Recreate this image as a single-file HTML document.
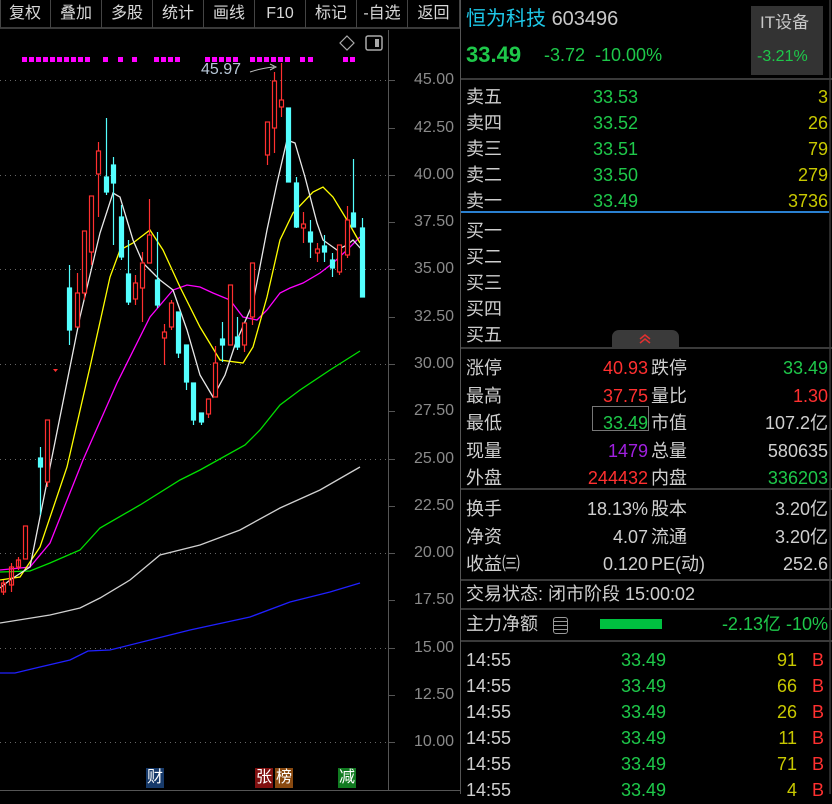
<!DOCTYPE html>
<html><head><meta charset="utf-8"><style>
*{margin:0;padding:0;box-sizing:border-box}
body{width:832px;height:794px;background:#000;overflow:hidden;position:relative;font-family:"Liberation Sans","Noto Sans CJK SC",sans-serif;color:#c8c8c8}
.a{position:absolute;white-space:nowrap;line-height:1}
.tb{position:absolute;top:0;height:28px;font-size:16px;color:#d8d8d8;text-align:center;line-height:28px;border-right:1px solid #444}
.f18{font-size:18px}
.g{color:#1ec84a}.y{color:#c8c800}.r{color:#ff3030}.w{color:#cfcfcf}
.hl{position:absolute;left:461px;width:371px;height:2px;background:#3a3a3a}
.ax{position:absolute;font-size:16px;color:#8a8a8a;right:378px;line-height:1}
</style></head><body>
<div style="position:absolute;left:0;top:0;width:460px;height:29px;border-bottom:2px solid #3a3a3a;border-left:1px solid #444"></div>
<div class="tb" style="left:0;width:51px">复权</div>
<div class="tb" style="left:51px;width:51px">叠加</div>
<div class="tb" style="left:102px;width:51px">多股</div>
<div class="tb" style="left:153px;width:51px">统计</div>
<div class="tb" style="left:204px;width:51px">画线</div>
<div class="tb" style="left:255px;width:51px">F10</div>
<div class="tb" style="left:306px;width:51px">标记</div>
<div class="tb" style="left:357px;width:51px">-自选</div>
<div class="tb" style="left:408px;width:52px">返回</div>

<svg style="position:absolute;left:0;top:0" width="461" height="794">
<g stroke="#666" stroke-dasharray="1,4" stroke-width="1">
<line x1="0" y1="80.5" x2="388" y2="80.5"/><line x1="0" y1="175.5" x2="388" y2="175.5"/><line x1="0" y1="269.5" x2="388" y2="269.5"/><line x1="0" y1="364.5" x2="388" y2="364.5"/><line x1="0" y1="459.5" x2="388" y2="459.5"/><line x1="0" y1="553.5" x2="388" y2="553.5"/><line x1="0" y1="648.5" x2="388" y2="648.5"/><line x1="0" y1="742.5" x2="388" y2="742.5"/>
</g>
<g stroke="#555" stroke-width="1">
<line x1="388.5" y1="30" x2="388.5" y2="790"/>
<line x1="0" y1="790.5" x2="460" y2="790.5"/>
<line x1="460.5" y1="0" x2="460.5" y2="794"/>
<line x1="388" y1="80.5" x2="395" y2="80.5"/><line x1="388" y1="128.5" x2="395" y2="128.5"/><line x1="388" y1="175.5" x2="395" y2="175.5"/><line x1="388" y1="222.5" x2="395" y2="222.5"/><line x1="388" y1="269.5" x2="395" y2="269.5"/><line x1="388" y1="317.5" x2="395" y2="317.5"/><line x1="388" y1="364.5" x2="395" y2="364.5"/><line x1="388" y1="411.5" x2="395" y2="411.5"/><line x1="388" y1="459.5" x2="395" y2="459.5"/><line x1="388" y1="506.5" x2="395" y2="506.5"/><line x1="388" y1="553.5" x2="395" y2="553.5"/><line x1="388" y1="600.5" x2="395" y2="600.5"/><line x1="388" y1="648.5" x2="395" y2="648.5"/><line x1="388" y1="695.5" x2="395" y2="695.5"/><line x1="388" y1="742.5" x2="395" y2="742.5"/>
</g>
<g fill="#ff00ff">
<rect x="22" y="57" width="5" height="5"/><rect x="29" y="57" width="5" height="5"/><rect x="36" y="57" width="5" height="5"/><rect x="43" y="57" width="5" height="5"/><rect x="50" y="57" width="5" height="5"/><rect x="57" y="57" width="5" height="5"/><rect x="64" y="57" width="5" height="5"/><rect x="71" y="57" width="5" height="5"/><rect x="78" y="57" width="5" height="5"/><rect x="85" y="57" width="5" height="5"/><rect x="103" y="57" width="5" height="5"/><rect x="118" y="57" width="5" height="5"/><rect x="132" y="57" width="5" height="5"/><rect x="154" y="57" width="5" height="5"/><rect x="161" y="57" width="5" height="5"/><rect x="168" y="57" width="5" height="5"/><rect x="175" y="57" width="5" height="5"/><rect x="205" y="57" width="5" height="5"/><rect x="212" y="57" width="5" height="5"/><rect x="219" y="57" width="5" height="5"/><rect x="226" y="57" width="5" height="5"/><rect x="233" y="57" width="5" height="5"/><rect x="250" y="57" width="5" height="5"/><rect x="257" y="57" width="5" height="5"/><rect x="264" y="57" width="5" height="5"/><rect x="271" y="57" width="5" height="5"/><rect x="278" y="57" width="5" height="5"/><rect x="285" y="57" width="5" height="5"/><rect x="300" y="57" width="5" height="5"/><rect x="308" y="57" width="5" height="5"/><rect x="343" y="57" width="5" height="5"/><rect x="350" y="57" width="5" height="5"/>
</g>
<path d="M347 36 L354 43 L347 50 L340 43 Z" fill="none" stroke="#aaa" stroke-width="1.2"/>
<rect x="366" y="36" width="16" height="14" rx="2" fill="none" stroke="#aaa" stroke-width="1.5"/><rect x="375" y="39" width="4" height="8" fill="#aaa"/>
<g fill="none" stroke-width="1.3">
<polyline stroke="#2020ff" points="0,673 15,673 40,667 70,660 88,651 110,650 150,640 190,630 250,617 290,602 330,592 360,583"/>
<polyline stroke="#d0d0d0" points="0,623 50,615 80,608 100,598 130,580 160,555 200,545 240,530 280,508 320,490 360,467"/>
<polyline stroke="#00e000" points="0,572 30,571 50,563 80,550 100,528 140,505 180,480 200,470 245,445 260,430 280,405 300,390 330,370 360,351"/>
<polyline stroke="#ff00ff" points="0,570 30,567 50,543 83,460 117,383 150,317 173,290 187,285 200,287 213,293 230,300 243,317 257,320 267,310 280,293 290,288 303,283 320,273 333,263 347,250 360,237"/>
<polyline stroke="#ffff00" points="0,580 20,577 40,547 67,467 90,367 110,277 120,250 133,243 150,230 163,250 180,287 200,327 220,360 243,363 253,347 267,297 280,240 293,213 313,192 323,187 333,197 347,220 360,243"/>
<polyline stroke="#e8e8e8" points="0,588 10,580 30,567 40,517 60,417 80,317 100,233 113,193 120,197 133,240 143,263 160,280 173,290 187,330 200,375 213,397 225,375 235,345 253,303 267,230 277,183 287,140 295,143 305,177 317,223 323,240 337,250 347,245 353,240 362,250"/>
</g>
<g stroke-width="1.2">
<g stroke="#ff3030" fill="none">
<line x1="3.5" y1="580" x2="3.5" y2="595"/><rect x="1.5" y="583" width="4" height="9"/>
<line x1="11.5" y1="563" x2="11.5" y2="592"/><rect x="9.5" y="567" width="4" height="18"/>
<line x1="18.5" y1="557" x2="18.5" y2="570"/><rect x="16.5" y="560" width="4" height="7"/>
<rect x="23.5" y="526" width="4" height="33"/>
<line x1="47.5" y1="420" x2="47.5" y2="487"/><rect x="45.5" y="420" width="4" height="62" fill="#000"/>
<line x1="77.5" y1="273" x2="77.5" y2="327"/><rect x="75.5" y="293" width="4" height="34" fill="#000"/>
<line x1="84.5" y1="231" x2="84.5" y2="300"/><rect x="82.5" y="231" width="4" height="62" fill="#000"/>
<line x1="91.5" y1="196" x2="91.5" y2="265"/><rect x="89.5" y="196" width="4" height="56" fill="#000"/>
<line x1="98.5" y1="142" x2="98.5" y2="217"/><rect x="96.5" y="151" width="4" height="23" fill="#000"/>
<line x1="135.5" y1="275" x2="135.5" y2="305"/><rect x="133.5" y="283" width="4" height="16" fill="#000"/>
<line x1="142.5" y1="252" x2="142.5" y2="322"/><rect x="140.5" y="263" width="4" height="25" fill="#000"/>
<line x1="149.5" y1="199" x2="149.5" y2="263"/><rect x="147.5" y="235" width="4" height="28" fill="#000"/>
<line x1="164.5" y1="324" x2="164.5" y2="365"/><rect x="162.5" y="332" width="4" height="6" fill="#000"/>
<line x1="171.5" y1="300" x2="171.5" y2="330"/><rect x="169.5" y="303" width="4" height="24" fill="#000"/>
<line x1="208.5" y1="399" x2="208.5" y2="418"/><rect x="206.5" y="399" width="4" height="15" fill="#000"/>
<line x1="215.5" y1="346" x2="215.5" y2="397"/><rect x="213.5" y="363" width="4" height="34" fill="#000"/>
<rect x="228.5" y="285" width="4" height="60" fill="#000"/>
<line x1="244.5" y1="323" x2="244.5" y2="352"/><rect x="242.5" y="323" width="4" height="22" fill="#000"/>
<line x1="252.5" y1="263" x2="252.5" y2="325"/><rect x="250.5" y="263" width="4" height="54" fill="#000"/>
<line x1="267.5" y1="122" x2="267.5" y2="165"/><rect x="265.5" y="122" width="4" height="33" fill="#000"/>
<line x1="274.5" y1="72" x2="274.5" y2="153"/><rect x="272.5" y="81" width="4" height="47" fill="#000"/>
<line x1="281.5" y1="63" x2="281.5" y2="117"/><rect x="279.5" y="100" width="4" height="7" fill="#000"/>
<line x1="303.5" y1="212" x2="303.5" y2="243"/><rect x="301.5" y="224" width="4" height="4" fill="#000"/>
<line x1="317.5" y1="243" x2="317.5" y2="262"/><rect x="315.5" y="249" width="4" height="4" fill="#000"/>
<line x1="339.5" y1="245" x2="339.5" y2="275"/><rect x="337.5" y="245" width="4" height="27" fill="#000"/>
<line x1="347.5" y1="206" x2="347.5" y2="258"/><rect x="345.5" y="220" width="4" height="35" fill="#000"/>
</g>
<g stroke="#54ffff" fill="#54ffff">
<line x1="40.5" y1="447" x2="40.5" y2="515"/><rect x="38.5" y="458" width="4" height="9"/>
<line x1="69.5" y1="265" x2="69.5" y2="345"/><rect x="67.5" y="288" width="4" height="42"/>
<line x1="106.5" y1="118" x2="106.5" y2="195"/><rect x="104.5" y="177" width="4" height="15"/>
<line x1="113.5" y1="157" x2="113.5" y2="245"/><rect x="111.5" y="165" width="4" height="18"/>
<line x1="121.5" y1="205" x2="121.5" y2="260"/><rect x="119.5" y="217" width="4" height="40"/>
<line x1="128.5" y1="240" x2="128.5" y2="305"/><rect x="126.5" y="274" width="4" height="28"/>
<line x1="157.5" y1="232" x2="157.5" y2="308"/><rect x="155.5" y="280" width="4" height="25"/>
<line x1="178.5" y1="312" x2="178.5" y2="358"/><rect x="176.5" y="312" width="4" height="41"/>
<line x1="186.5" y1="345" x2="186.5" y2="390"/><rect x="184.5" y="345" width="4" height="37"/>
<line x1="193.5" y1="383" x2="193.5" y2="425"/><rect x="191.5" y="383" width="4" height="37"/>
<line x1="201.5" y1="413" x2="201.5" y2="425"/><rect x="199.5" y="413" width="4" height="9"/>
<line x1="222.5" y1="322" x2="222.5" y2="362"/><rect x="220.5" y="339" width="4" height="6"/>
<line x1="237.5" y1="317" x2="237.5" y2="350"/><rect x="235.5" y="337" width="4" height="10"/>
<rect x="286.5" y="108" width="4" height="74"/>
<line x1="296.5" y1="177" x2="296.5" y2="228"/><rect x="294.5" y="183" width="4" height="44"/>
<line x1="310.5" y1="220" x2="310.5" y2="258"/><rect x="308.5" y="232" width="4" height="10"/>
<line x1="324.5" y1="235" x2="324.5" y2="262"/><rect x="322.5" y="246" width="4" height="6"/>
<line x1="332.5" y1="253" x2="332.5" y2="277"/><rect x="330.5" y="260" width="4" height="8"/>
<line x1="353.5" y1="159" x2="353.5" y2="227"/><rect x="351.5" y="213" width="4" height="14"/>
<line x1="362.5" y1="218" x2="362.5" y2="297"/><rect x="360.5" y="228" width="4" height="69"/>
</g>
</g>
<path d="M53 369 h5 l-2.5 3 z" fill="#ff3030"/>
<path d="M250 72 Q 262 68 274 67" fill="none" stroke="#bbb" stroke-width="1"/>
<path d="M270 64 L276 67 L270 70" fill="none" stroke="#bbb" stroke-width="1"/>
</svg>
<div class="a" style="left:201px;top:62px;font-size:16px;color:#b8c8d8">45.97</div>

<div class="ax" style="top:72px">45.00</div>
<div class="ax" style="top:120px">42.50</div>
<div class="ax" style="top:167px">40.00</div>
<div class="ax" style="top:214px">37.50</div>
<div class="ax" style="top:261px">35.00</div>
<div class="ax" style="top:309px">32.50</div>
<div class="ax" style="top:356px">30.00</div>
<div class="ax" style="top:403px">27.50</div>
<div class="ax" style="top:451px">25.00</div>
<div class="ax" style="top:498px">22.50</div>
<div class="ax" style="top:545px">20.00</div>
<div class="ax" style="top:592px">17.50</div>
<div class="ax" style="top:640px">15.00</div>
<div class="ax" style="top:687px">12.50</div>
<div class="ax" style="top:734px">10.00</div>

<div class="a" style="left:146px;top:768px;width:18px;height:20px;background:#173a6a;color:#fff;font-size:16px;text-align:center;line-height:20px">财</div>
<div class="a" style="left:255px;top:768px;width:18px;height:20px;background:#801010;color:#fff;font-size:16px;text-align:center;line-height:20px">张</div>
<div class="a" style="left:275px;top:768px;width:18px;height:20px;background:#8a4a10;color:#fff;font-size:16px;text-align:center;line-height:20px">榜</div>
<div class="a" style="left:338px;top:768px;width:18px;height:20px;background:#107a20;color:#fff;font-size:16px;text-align:center;line-height:20px">减</div>

<div style="position:absolute;left:829px;top:0;width:2px;height:794px;background:#2a2a2a"></div>
<div class="a" style="left:466px;top:9px;font-size:20px;color:#1ec8e8">恒为科技 <span style="color:#c8c8c8">603496</span></div>
<div class="a g" style="left:466px;top:44px;font-size:22px;font-weight:bold">33.49</div>
<div class="a g" style="left:544px;top:46px;font-size:18px">-3.72&nbsp;&nbsp;-10.00%</div>
<div style="position:absolute;left:751px;top:6px;width:72px;height:69px;background:#333"></div>
<div class="a" style="left:760px;top:14px;font-size:17px;color:#c8c8c8">IT设备</div>
<div class="a g" style="left:757px;top:49px;font-size:16px">-3.21%</div>
<div class="hl" style="top:78px"></div>

<div class="a f18 w" style="left:466px;top:84px;line-height:1.45">卖五<br>卖四<br>卖三<br>卖二<br>卖一</div>
<div class="a f18 g" style="left:593px;top:84px;line-height:1.45">33.53<br>33.52<br>33.51<br>33.50<br>33.49</div>
<div class="a f18 y" style="right:4px;top:84px;line-height:1.45;text-align:right">3<br>26<br>79<br>279<br>3736</div>
<div style="position:absolute;left:461px;top:211px;width:368px;height:2px;background:#2a80d0"></div>
<div class="a f18 w" style="left:466px;top:218px;line-height:1.45">买一<br>买二<br>买三<br>买四<br>买五</div>
<div style="position:absolute;left:612px;top:330px;width:67px;height:17px;background:#3a3a3a;border-radius:7px 7px 0 0"></div>
<svg style="position:absolute;left:637px;top:333px" width="16" height="12"><path d="M3 6 L8 2 L13 6 M3 10 L8 6 L13 10" fill="none" stroke="#e03030" stroke-width="1.5"/></svg>
<div class="hl" style="top:347px"></div>

<div class="a f18 w" style="left:466px;top:355px;line-height:1.53">涨停<br>最高<br>最低<br>现量<br>外盘</div>
<div class="a f18" style="right:184px;top:355px;line-height:1.53;text-align:right"><span class="r">40.93</span><br><span class="r">37.75</span><br><span class="g">33.49</span><br><span style="color:#a020e0">1479</span><br><span class="r">244432</span></div>
<div style="position:absolute;left:592px;top:406px;width:57px;height:25px;border:1px solid #777"></div>
<div class="a f18 w" style="left:651px;top:355px;line-height:1.53">跌停<br>量比<br>市值<br>总量<br>内盘</div>
<div class="a f18" style="right:4px;top:355px;line-height:1.53;text-align:right"><span class="g">33.49</span><br><span class="r">1.30</span><br><span class="w">107.2亿</span><br><span class="w">580635</span><br><span class="g">336203</span></div>
<div class="hl" style="top:488px"></div>
<div class="a f18 w" style="left:466px;top:496px;line-height:1.53">换手<br>净资<br>收益㈢</div>
<div class="a f18 w" style="right:184px;top:496px;line-height:1.53;text-align:right">18.13%<br>4.07<br>0.120</div>
<div class="a f18 w" style="left:651px;top:496px;line-height:1.53">股本<br>流通<br>PE(动)</div>
<div class="a f18 w" style="right:4px;top:496px;line-height:1.53;text-align:right">3.20亿<br>3.20亿<br>252.6</div>
<div class="hl" style="top:579px"></div>
<div class="a f18 w" style="left:466px;top:585px">交易状态: 闭市阶段 15:00:02</div>
<div class="hl" style="top:608px"></div>
<div class="a f18 w" style="left:466px;top:615px">主力净额</div>
<div style="position:absolute;left:553px;top:617px;width:15px;height:17px;border:1.5px solid #999;border-radius:3px;background:repeating-linear-gradient(#000 0 3px,#999 3px 4px)"></div>
<div style="position:absolute;left:600px;top:619px;width:62px;height:10px;background:#00c040"></div>
<div class="a f18 g" style="right:4px;top:615px">-2.13亿 -10%</div>
<div class="hl" style="top:640px"></div>
<div class="a f18 w" style="left:466px;top:647px;line-height:1.45">14:55<br>14:55<br>14:55<br>14:55<br>14:55<br>14:55</div>
<div class="a f18 g" style="left:621px;top:647px;line-height:1.45">33.49<br>33.49<br>33.49<br>33.49<br>33.49<br>33.49</div>
<div class="a f18 y" style="right:35px;top:647px;line-height:1.45;text-align:right">91<br>66<br>26<br>11<br>71<br>4</div>
<div class="a f18 r" style="left:812px;top:647px;line-height:1.45">B<br>B<br>B<br>B<br>B<br>B</div>
</body></html>
